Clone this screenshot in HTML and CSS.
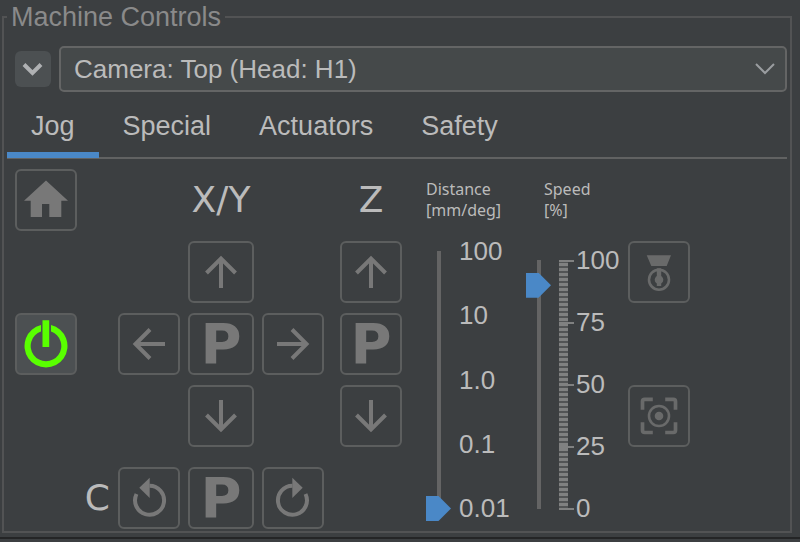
FILE: index.html
```html
<!DOCTYPE html>
<html lang="en">
<head>
<meta charset="utf-8">
<title>Machine Controls</title>
<link rel="stylesheet" href="styles.css">
</head>
<body>
<svg class="defs" aria-hidden="true">
  <symbol id="arrow" viewBox="2 2 58 58"><path d="M31 47V18M16.5 32L31 17.5L45.5 32" fill="none" stroke="currentColor" stroke-width="4"/></symbol>
  <symbol id="rotate" viewBox="2 2 58 58"><path d="M31.5 18.8A14.5 14.5 0 1 1 18.5 27" fill="none" stroke="currentColor" stroke-width="4"/><path d="M31.7 10.7V31L21.3 20.7Z" fill="currentColor"/></symbol>
</svg>
<fieldset class="machine">
  <legend>Machine Controls</legend>
  <div class="device">
    <button class="collapse" aria-label="Collapse">
      <svg width="36" height="36" viewBox="0 0 36 36"><path d="M9 13.5L17.5 22L26 13.5" fill="none" stroke="currentColor" stroke-width="4"/></svg>
    </button>
    <div class="combo">
      <select aria-label="Selected tool"><option>Camera: Top (Head: H1)</option></select>
      <svg class="combo-arrow" width="20" height="12" viewBox="0 0 20 12"><path d="M1 1L10 10L19 1" fill="none" stroke="currentColor" stroke-width="2"/></svg>
    </div>
  </div>

  <div class="tabs" role="tablist">
    <button class="tab selected" role="tab" aria-selected="true">Jog</button>
    <button class="tab" role="tab">Special</button>
    <button class="tab" role="tab">Actuators</button>
    <button class="tab" role="tab">Safety</button>
  </div>

  <div class="jog">
    <div class="pad">
      <button class="key home" aria-label="Home" disabled><svg viewBox="2 2 58 58"><path d="M31 11.5L53 31.7H46.3V48H34.3V35H27V48H15.7V31.7H9Z" fill="currentColor"/></svg></button>
      <span class="axis xy">X/Y</span>
      <span class="axis z">Z</span>

      <button class="key y-up" aria-label="Y plus" disabled><svg viewBox="2 2 58 58"><use href="#arrow" x="2" y="2" width="58" height="58"/></svg></button>
      <button class="key z-up" aria-label="Z plus" disabled><svg viewBox="2 2 58 58"><use href="#arrow" x="2" y="2" width="58" height="58"/></svg></button>

      <button class="key power" aria-label="Power"><svg viewBox="2 2 58 58"><path d="M36 12.1A21.5 21.5 0 1 1 26 12.1V18.5A15.3 15.3 0 1 0 36 18.5ZM27.5 7.3H34.2V34H27.5Z" fill="currentColor"/></svg></button>
      <button class="key x-minus" aria-label="X minus" disabled><svg class="left" viewBox="2 2 58 58"><use href="#arrow" x="2" y="2" width="58" height="58"/></svg></button>
      <button class="key xy-park" disabled>P</button>
      <button class="key x-plus" aria-label="X plus" disabled><svg class="right" viewBox="2 2 58 58"><use href="#arrow" x="2" y="2" width="58" height="58"/></svg></button>
      <button class="key z-park" disabled>P</button>

      <button class="key y-down" aria-label="Y minus" disabled><svg class="down" viewBox="2 2 58 58"><use href="#arrow" x="2" y="2" width="58" height="58"/></svg></button>
      <button class="key z-down" aria-label="Z minus" disabled><svg class="down" viewBox="2 2 58 58"><use href="#arrow" x="2" y="2" width="58" height="58"/></svg></button>

      <span class="axis c">C</span>
      <button class="key c-ccw" aria-label="Rotate counterclockwise" disabled><svg viewBox="2 2 58 58"><use href="#rotate" x="2" y="2" width="58" height="58"/></svg></button>
      <button class="key c-park" disabled>P</button>
      <button class="key c-cw" aria-label="Rotate clockwise" disabled><svg class="mirror" viewBox="2 2 58 58"><use href="#rotate" x="2" y="2" width="58" height="58"/></svg></button>
    </div>

    <div class="gauge distance">
      <label for="distance">Distance<br>[mm/deg]</label>
      <div class="scale">
        <input type="range" id="distance" min="0" max="4" value="0">
        <div class="values"><span>100</span><span>10</span><span>1.0</span><span>0.1</span><span>0.01</span></div>
      </div>
    </div>

    <div class="gauge speed">
      <label for="speed">Speed<br>[%]</label>
      <div class="scale">
        <input type="range" id="speed" min="0" max="100" value="90">
        <svg class="ticks" width="17" height="273" viewBox="0 0 17 273">
          <path d="M0 13.5H9V261H0Z" fill="#525455"/>
          <path d="M4.5 15V262" stroke="currentColor" stroke-width="9" stroke-dasharray="3 2"/>
          <path d="M0 13H15M0 75H15M0 137H15M0 199H15M0 261H15" stroke="currentColor" stroke-width="2"/>
        </svg>
        <div class="values"><span>100</span><span>75</span><span>50</span><span>25</span><span>0</span></div>
      </div>
    </div>

    <div class="camera">
      <button class="key" aria-label="Position tool" disabled><svg viewBox="2 2 58 58"><path d="M18.7 14.3H43L38.7 25H23.3ZM28.8 27.3H33.2V45H28.8Z" fill="currentColor"/><circle cx="31" cy="38.7" r="10" fill="none" stroke="currentColor" stroke-width="2.6"/><circle cx="31" cy="38.7" r="4.3" fill="currentColor"/></svg></button>
      <button class="key" aria-label="Position camera" disabled><svg viewBox="2 2 58 58"><path d="M14.5 24.8V16.5Q14.5 14.3 16.7 14.3H24.8M37.2 14.3H45.3Q47.5 14.3 47.5 16.5V24.8M47.5 37.2V45.3Q47.5 47.5 45.3 47.5H37.2M24.8 47.5H16.7Q14.5 47.5 14.5 45.3V37.2" fill="none" stroke="currentColor" stroke-width="3.7"/><circle cx="31" cy="31" r="10" fill="none" stroke="currentColor" stroke-width="2.6"/><circle cx="31" cy="31" r="4.3" fill="currentColor"/></svg></button>
    </div>
  </div>
</fieldset>
<footer class="divider"></footer>
</body>
</html>
```
FILE: styles.css
```css
* {
  box-sizing: border-box;
}

body {
  margin: 0;
  min-height: 100vh;
  background: #3c3f41;
  color: #bbbbbb;
  font: 26px "Liberation Sans", Arial, sans-serif;
}

button,
select {
  margin: 0;
  padding: 0;
  border: 0;
  color: inherit;
  font: inherit;
}

.defs {
  display: none;
}

.machine {
  min-width: 0;
  margin: 0 8px 0 2px;
  padding: 12px 3px 2px;
  border: 2px solid #525354;
}

.machine > legend {
  padding: 0 4px;
  color: #8a8a8a;
  font-size: 27px;
  line-height: 34px;
}

.device {
  display: flex;
  align-items: center;
  gap: 8px;
  padding-left: 8px;
}

.collapse {
  width: 36px;
  height: 36px;
  border-radius: 6px;
  background: #4c5052;
  color: #afb1b3;
}

.collapse svg {
  display: block;
}

.combo {
  position: relative;
  flex: 1;
}

.combo select {
  display: block;
  width: 100%;
  height: 46px;
  padding: 0 40px 0 13px;
  border: 2px solid #646565;
  border-radius: 5px;
  background: #45494a;
  appearance: none;
}

.combo-arrow {
  position: absolute;
  top: 17px;
  right: 12px;
  color: #9a9da0;
  pointer-events: none;
}

.tabs {
  display: flex;
  height: 67px;
  border-bottom: 2px solid #616262;
}

.tab {
  height: 66px;
  padding: 8px 24px 0;
  border-bottom: 6px solid transparent;
  background: none;
  font-size: 27px;
}

.tab.selected {
  border-bottom-color: #4a88c7;
}

.jog {
  display: flex;
  padding: 10px 0 0 8px;
}

.pad {
  display: grid;
  grid-template-columns: 62px 25px 62px 66px 62px 70px;
  grid-template-rows: repeat(4, 62px) 72px;
  gap: 10px 8px;
  align-items: end;
  justify-items: end;
  margin-right: 24px;
}

.key {
  display: flex;
  align-items: center;
  justify-content: center;
  width: 62px;
  height: 62px;
  border: 2px solid #5c5e5e;
  border-radius: 6px;
  background: none;
  color: #787878;
  font: bold 56px/58px "DejaVu Sans", sans-serif;
}

.key svg {
  display: block;
  width: 58px;
  height: 58px;
}

.left { transform: rotate(-90deg); }
.right { transform: rotate(90deg); }
.down { transform: rotate(180deg); }
.mirror { transform: scaleX(-1); }

.axis {
  align-self: end;
  font: 36px/62px "DejaVu Sans", sans-serif;
}

.home { grid-area: 1 / 1; }
.xy { grid-area: 1 / 4; justify-self: center; }
.z { grid-area: 1 / 6; width: 62px; text-align: center; }
.y-up { grid-area: 2 / 4; }
.z-up { grid-area: 2 / 6; }
.power { grid-area: 3 / 1; background: #4c5052; color: #59ff00; }
.x-minus { grid-area: 3 / 3; }
.xy-park { grid-area: 3 / 4; }
.x-plus { grid-area: 3 / 5; }
.z-park { grid-area: 3 / 6; }
.y-down { grid-area: 4 / 4; }
.z-down { grid-area: 4 / 6; }
.c { grid-area: 5 / 2; }
.c-ccw { grid-area: 5 / 3; }
.c-park { grid-area: 5 / 4; }
.c-cw { grid-area: 5 / 5; }

.y-up,
.xy-park,
.y-down,
.c-park {
  width: 66px;
}

.gauge {
  display: flex;
  flex-direction: column;
  justify-content: space-between;
  width: 100px;
  padding: 10px 0 8px;
}

.gauge label {
  font: 16px/21px "Noto Sans", sans-serif;
}

.speed label {
  padding-left: 18px;
}

.scale {
  display: flex;
  height: 282px;
}

.speed .scale {
  height: 273px;
}

.scale input {
  width: 25px;
  height: 100%;
  margin: 0 8px 0 0;
  background: linear-gradient(#646464, #646464) center / 4px calc(100% - 24px) no-repeat;
  appearance: none;
  writing-mode: vertical-lr;
  direction: rtl;
}

.scale input::-webkit-slider-thumb {
  width: 25px;
  height: 25px;
  border: 0;
  background: #4a88c7;
  clip-path: polygon(0 0, 50% 0, 100% 50%, 50% 100%, 0 100%);
  appearance: none;
}

.ticks {
  flex: none;
  color: #808181;
}

.values {
  display: flex;
  flex-direction: column;
  justify-content: space-between;
  line-height: 25px;
}

.camera {
  display: flex;
  flex-direction: column;
  gap: 82px;
  padding: 72px 0 0 2px;
}

.camera .key {
  color: #696a6a;
}

.divider {
  margin-top: 4px;
  border-top: 2px solid #242526;
}
```
